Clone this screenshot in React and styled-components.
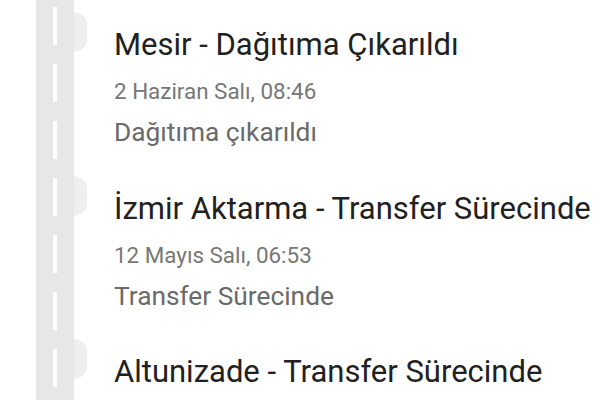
import React from "react";
import styled, { createGlobalStyle } from "styled-components";

const GlobalStyle = createGlobalStyle`
  html, body {
    margin: 0;
    padding: 0;
    background: #fff;
  }
  body {
    font-family: Roboto, "Liberation Sans", sans-serif;
    overflow: hidden;
  }
`;

const steps = [
  {
    title: "Mesir - Dağıtıma Çıkarıldı",
    date: "2 Haziran Salı, 08:46",
    status: "Dağıtıma çıkarıldı",
  },
  {
    title: "İzmir Aktarma - Transfer Sürecinde",
    date: "12 Mayıs Salı, 06:53",
    status: "Transfer Sürecinde",
  },
  {
    title: "Altunizade - Transfer Sürecinde",
  },
];

const Tracking = () => {
  return (
    <StTimeline>
      <GlobalStyle />
      {steps.map((step) => (
        <StStep key={step.title}>
          <StMarker />
          <StInfo>
            <StTitle>{step.title}</StTitle>
            {step.date && <StDate>{step.date}</StDate>}
            {step.status && <StStatus>{step.status}</StStatus>}
          </StInfo>
        </StStep>
      ))}
    </StTimeline>
  );
};

const StTimeline = styled.div`
  width: 600px;
  height: 400px;
  overflow: hidden;
  display: flex;
  flex-direction: column;
  background:
    linear-gradient(#fff 0 38px, transparent 38px) 53px 7px / 4px 57px repeat-y,
    linear-gradient(#e7e7e7, #e7e7e7) 36px 0 / 38px 100% no-repeat,
    #fff;
`;

const StStep = styled.div`
  display: flex;
  align-items: flex-start;
  height: 163.5px;
  flex-shrink: 0;
  padding-left: 74px;
`;

const StMarker = styled.div`
  width: 13px;
  height: 40px;
  margin-top: 12px;
  background: #efefef;
  border-radius: 0 20px 20px 0 / 0 20px 20px 0;
`;

const StInfo = styled.div`
  display: flex;
  flex-direction: column;
  margin-left: 27px;
  padding-top: 27px;
  white-space: nowrap;
`;

const StTitle = styled.div`
  font-size: 31px;
  line-height: 36px;
  color: #212121;
`;

const StDate = styled.div`
  margin-top: 15px;
  font-size: 22.4px;
  line-height: 26px;
  color: #777;
`;

const StStatus = styled.div`
  margin-top: 13px;
  font-size: 26.3px;
  line-height: 30px;
  color: #6a6a6a;
`;

export default Tracking;
